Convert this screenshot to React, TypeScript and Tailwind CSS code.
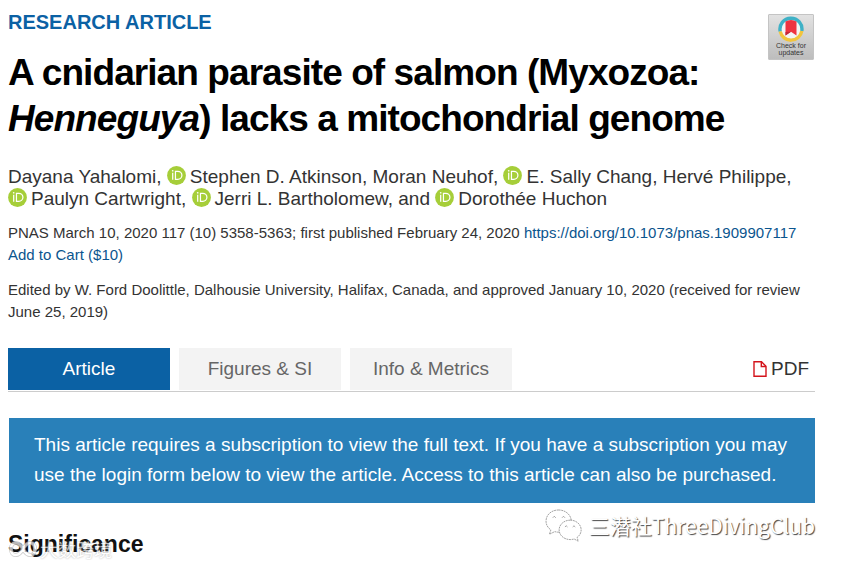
import { useState } from "react";

const tabs = ["Article", "Figures & SI", "Info & Metrics"];

function OrcidIcon() {
  return (
    <svg viewBox="0 0 20 20" className="mr-1 inline-block size-[19px] align-[-2px]" aria-label="ORCID">
      <circle cx="10" cy="10" r="9.9" fill="#a6ce39" />
      <g fill="none" stroke="#fff" strokeWidth="1.3">
        <path d="M6 7.2v7.2" />
        <path d="M8.900 5.600h2.400a4.400 4.200 0 0 1 0 8.400H8.900z" />
      </g>
      <circle cx="6" cy="5" r="0.9" fill="#fff" />
    </svg>
  );
}

function CheckForUpdates() {
  return (
    <button className="flex h-[46px] w-[46px] shrink-0 flex-col items-center rounded-[1px] border border-[#c4c4c4] bg-linear-to-b from-[#e2e2e2] to-[#bdbdbd] pt-px text-[7px] leading-[7px] text-[#333]">
      <svg viewBox="0 0 26 26" className="size-[26px] shrink-0">
        <circle cx="13" cy="13" r="10" fill="#f4f4f4" />
        <g fill="none" strokeWidth="3.400">
          <path d="M2.200 15.500A11 11 0 1 1 23.800 15" stroke="#3fb1c6" />
          <path d="M23.800 15A11 11 0 0 1 2.200 15.500" stroke="#f2c53d" />
        </g>
        <path d="M7.500 5.500Q13 2.500 18.500 5.500v14L13 15.800l-5.500 3.700z" fill="#ef3340" />
        <path d="M7.500 19.500v-3.500L13 15.800z" fill="#c0283a" />
      </svg>
      <span>Check for</span>
      <span>updates</span>
    </button>
  );
}

function PdfIcon() {
  return (
    <svg viewBox="0 0 14 16" className="h-4 w-[14px]" fill="none" stroke="#d4141c" strokeWidth="1.400">
      <path d="M1 .8h7.500l4.500 4.500v9.900H1z" />
      <path d="M8.300.8v4.700H13" />
    </svg>
  );
}

function WechatIcon() {
  return (
    <svg viewBox="0 0 38 34" className="h-[33px] w-[37px]" fill="#fff" stroke="#888" strokeWidth="0.800" strokeDasharray="2 0.700">
      <path d="M14 1C6.500 1 1 6 1 12.500c0 4 2 7 5 9L4.500 26l5.500-2.700c1.300.4 2.700.6 4 .6 7 0 13-5 13-11.400S21 1 14 1z" />
      <path d="M26 11.500c-6.500 0-11.500 4.500-11.500 10S19.500 31.500 26 31.500c1.400 0 2.700-.2 4-.6l4.200 2.300-1.200-3.900c2.600-1.800 4.200-4.700 4.200-7.800 0-5.500-5-10-11.200-10z" />
      <path d="M8 9q1.500-3 3 0M17.500 9q1.500-3 3 0M20.500 18.500q1.300-2.500 2.600 0M28.500 18.500q1.300-2.500 2.600 0" fill="none" strokeDasharray="none" />
    </svg>
  );
}

export default function App() {
  const [active, setActive] = useState("Article");

  return (
    <div className="relative bg-white pr-7 pl-2 font-['Liberation_Sans',Arial,sans-serif] text-[#333]">
      <header className="flex items-start justify-between">
        <div className="pt-2">
          <p className="text-xl leading-7 font-bold text-[#0b61a4]">RESEARCH ARTICLE</p>
          <h1 className="mt-[14px] text-[37px] leading-[46px] font-bold tracking-tight text-black">
            A cnidarian parasite of salmon (Myxozoa:
            <br />
            <em>Henneguya</em>) lacks a mitochondrial genome
          </h1>
        </div>
        <div className="pt-[14px] pr-px">
          <CheckForUpdates />
        </div>
      </header>

      <p className="mt-6 text-[19px] leading-[22px]">
        Dayana Yahalomi, <OrcidIcon />
        Stephen D. Atkinson, Moran Neuhof, <OrcidIcon />
        E. Sally Chang, Hervé Philippe,
        <br />
        <OrcidIcon />
        Paulyn Cartwright, <OrcidIcon />
        Jerri L. Bartholomew, and <OrcidIcon />
        Dorothée Huchon
      </p>

      <p className="mt-3 text-[15px] leading-[22px]">
        PNAS March 10, 2020 117 (10) 5358-5363; first published February 24, 2020{" "}
        <a href="https://doi.org/10.1073/pnas.1909907117" className="text-[#0b558e]">
          https://doi.org/10.1073/pnas.1909907117
        </a>
        <br />
        <a href="#cart" className="text-[#0b558e]">Add to Cart ($10)</a>
      </p>

      <p className="mt-[13px] text-[15px] leading-[22px]">
        Edited by W. Ford Doolittle, Dalhousie University, Halifax, Canada, and approved January 10, 2020 (received for review June 25, 2019)
      </p>

      <nav className="mt-[25px] flex items-center border-b border-[#ccc] pb-px">
        <div className="flex gap-[9px]">
          {tabs.map((tab) => (
            <button
              key={tab}
              onClick={() => setActive(tab)}
              className={`h-[42px] w-[162px] text-[19px] ${
                active === tab ? "bg-[#0b61a4] text-white" : "bg-[#f3f3f3] text-[#666]"
              }`}
            >
              {tab}
            </button>
          ))}
        </div>
        <a href="#pdf" className="ml-auto flex items-center gap-1 pr-[6px] text-[19px]">
          <PdfIcon />
          PDF
        </a>
      </nav>

      <div className="mt-[26px] ml-px bg-[#2980b9] pt-3 pr-5 pb-[13px] pl-[25px] text-[19px] leading-[30px] text-white">
        This article requires a subscription to view the full text. If you have a subscription you may
        use the login form below to view the article. Access to this article can also be purchased.
      </div>

      <h2 className="mt-[25px] text-[23px] leading-8 font-bold text-[#111]">Significance</h2>

      <div className="absolute top-[507px] right-7 flex items-center gap-[7px]">
        <WechatIcon />
        <span className="font-['Noto_Sans_CJK_SC',sans-serif] text-[21px] leading-9 text-white [text-shadow:1px_1px_1px_#444]">
          三潜社ThreeDivingClub
        </span>
      </div>

      <div className="absolute top-[537px] left-2 flex items-center gap-0.5 opacity-70">
        <svg viewBox="0 0 30 22" className="h-[22px] w-[30px]" fill="none">
          <path d="M15 11C11 3 3 3 3 11s8 8 12 0 12-8 12 0-8 8-12 0z" stroke="#bbb" strokeWidth="4" />
          <path d="M15 11C11 3 3 3 3 11s8 8 12 0 12-8 12 0-8 8-12 0z" stroke="#fff" strokeWidth="2.500" />
        </svg>
        <span className="font-['Noto_Sans_CJK_SC',sans-serif] text-lg leading-6 text-white [text-shadow:0_0_2px_#888]">
          大数跨境
        </span>
      </div>
    </div>
  );
}
